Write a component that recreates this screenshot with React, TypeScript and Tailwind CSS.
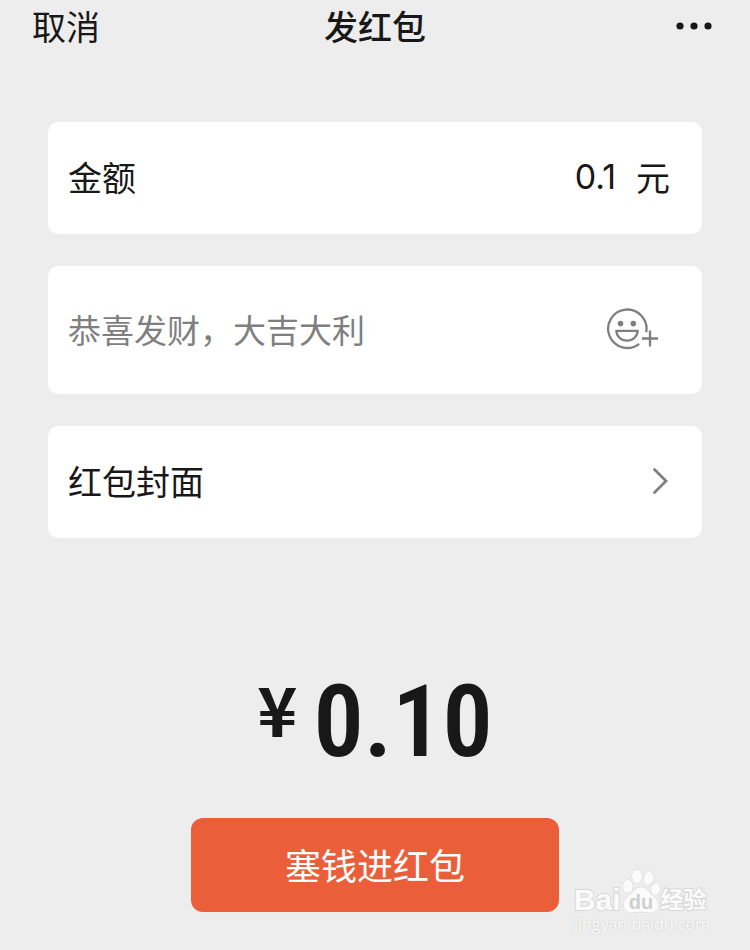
import type { ReactNode } from "react";

type CardProps = {
  className?: string;
  children: ReactNode;
};

const Card = (props: CardProps) => {
  return (
    <div
      className={`flex items-center rounded-[10px] bg-white pb-0.5 pl-5 pr-8 ${
        props.className ?? "h-28"
      }`}
    >
      {props.children}
    </div>
  );
};

// smiley with a small plus at the lower right
const EmojiAddIcon = () => (
  <svg width="52" height="42" viewBox="0 0 52 42" fill="none" stroke="#7f7f7f" strokeWidth="2.3">
    <path d="M40.2 24.2A19.2 19.2 0 1 0 33.2 35.8" />
    <path d="M10.4 22.8h21.2c0 5.4-4.6 9.8-10.6 9.8s-10.600-4.400-10.600-9.800z" />
    <circle cx="14.5" cy="15.6" r="2.8" fill="#7f7f7f" stroke="none" />
    <circle cx="27.3" cy="15.6" r="2.8" fill="#7f7f7f" stroke="none" />
    <path d="M36 30.5h16M44 22.5v16" />
  </svg>
);

const ArrowIcon = () => (
  <svg width="18" height="28" viewBox="0 0 18 28" fill="none" stroke="#7f7f7f" strokeWidth="2.8">
    <path d="M2.5 2.5L14 14 2.5 25.5" strokeLinecap="round" />
  </svg>
);

const Watermark = () => (
  <div className="pointer-events-none absolute bottom-4 right-10 text-[#fbfbfb]">
    <div className="flex items-end font-bold [-webkit-text-stroke:2px_#d8d8d8] [paint-order:stroke_fill]">
      <span className="font-['Liberation_Sans',sans-serif] text-[30px] leading-7">Bai</span>
      <svg
        width="40"
        height="47"
        viewBox="180 20 120 140"
        fill="#fbfbfb"
        stroke="#d6d6d6"
        strokeWidth="3"
        className="[-webkit-text-stroke:0]"
      >
        <ellipse cx="200" cy="77" rx="15" ry="19" />
        <ellipse cx="228" cy="48" rx="15" ry="20" />
        <ellipse cx="263" cy="53" rx="15" ry="20" transform="rotate(14 263 53)" />
        <ellipse cx="284" cy="86" rx="13" ry="19" transform="rotate(10 284 86)" />
        <path d="M240 80c-17 0-22 14-32 23s-20 15-19 31c1 15 12 23 27 22 9-1 14-2 24-2s15 1 24 2c15 1 26-7 27-22 1-16-9-22-19-31-9-9-15-23-32-23z" />
        <text x="240" y="144" textAnchor="middle" fontSize="60" fontFamily="Liberation Sans, sans-serif" fill="#cfcfcf" stroke="none">
          du
        </text>
      </svg>
      <span className="text-[23px] leading-8">经验</span>
    </div>
    <div className="font-['Open_Sans',sans-serif] text-base leading-5 [text-shadow:0_0_2px_#c4c4c4]">
      jingyan.baidu.com
    </div>
  </div>
);

const App = () => {
  return (
    <div className="relative min-h-screen bg-[#ededed] pb-8 font-['Noto_Sans_CJK_SC',sans-serif] text-[34px] leading-[52px] text-[#181818]">
      <header className="grid h-[52px] grid-cols-3 items-center px-8">
        <button type="button" className="justify-self-start">
          取消
        </button>
        <h1 className="text-center font-medium">发红包</h1>
        <button type="button" aria-label="更多" className="justify-self-end pr-1">
          <svg width="38" height="8" viewBox="0 0 38 8" fill="currentColor">
            <circle cx="4" cy="4" r="3.6" />
            <circle cx="18" cy="4" r="3.6" />
            <circle cx="32" cy="4" r="3.6" />
          </svg>
        </button>
      </header>

      <main className="px-12 pt-[70px]">
        <div className="flex flex-col gap-8">
          <Card>
            <label htmlFor="amount">金额</label>
            <input
              id="amount"
              defaultValue="0.1"
              inputMode="decimal"
              className="min-w-0 flex-1 pr-5 text-right font-['Inter',sans-serif] outline-none"
            />
            <span>元</span>
          </Card>

          <Card className="h-32">
            <input
              aria-label="留言"
              placeholder="恭喜发财，大吉大利"
              className="min-w-0 flex-1 text-[33px] outline-none placeholder:text-[#7f7f7f]"
            />
            <button type="button" aria-label="添加表情" className="mr-3">
              <EmojiAddIcon />
            </button>
          </Card>

          <Card>
            <button type="button" className="flex flex-1 items-center justify-between">
              红包封面
              <ArrowIcon />
            </button>
          </Card>
        </div>

        <div className="mt-32 flex items-start justify-center gap-4 font-bold">
          <span className="text-[68px] leading-[84px]">¥</span>
          <span className="font-['Roboto_Condensed','Roboto',sans-serif] text-[100px] font-semibold leading-[112px]">
            0.10
          </span>
        </div>

        <button
          type="button"
          className="mx-auto mt-10 block h-[94px] w-[368px] max-w-full rounded-xl bg-[#ea5f39] pb-0.5 text-4xl text-white"
        >
          塞钱进红包
        </button>
      </main>

      <Watermark />
    </div>
  );
};

export default App;
